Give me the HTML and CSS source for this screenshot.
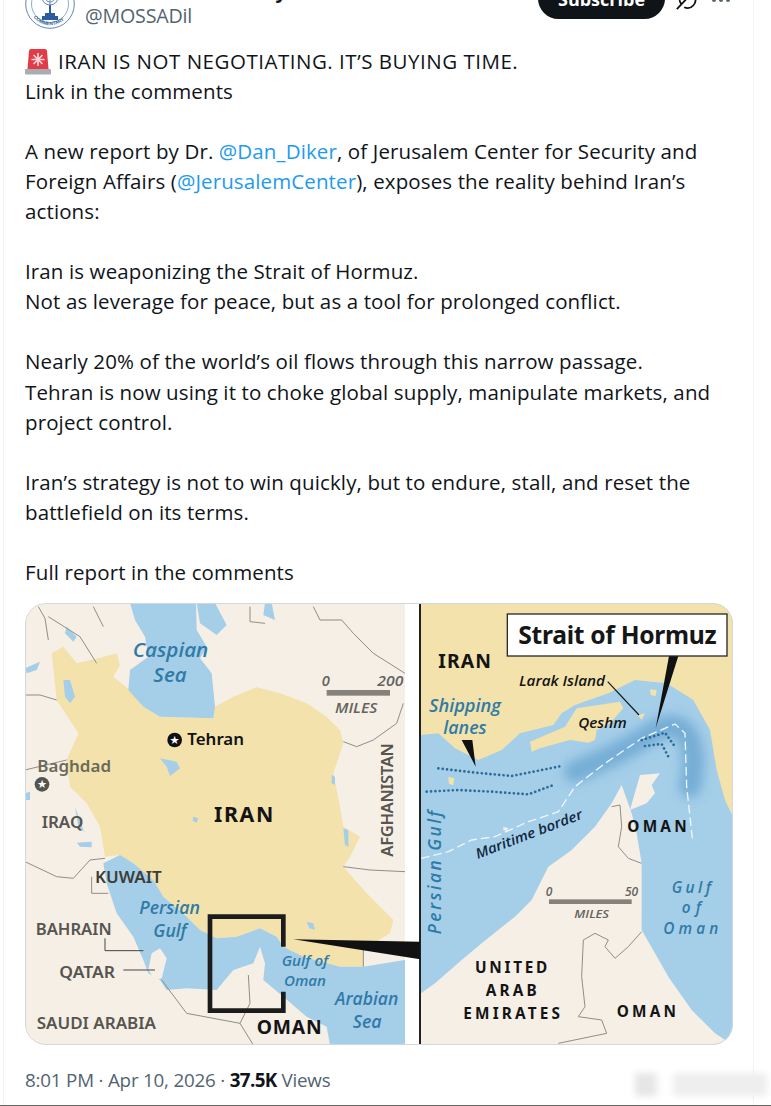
FILE: index.html
```html
<!DOCTYPE html>
<html lang="en">
<head>
<meta charset="utf-8">
<title>Post</title>
<link rel="stylesheet" href="styles.css">
</head>
<body>
<main class="page">
<article class="card">
  <header class="head">
    <svg class="avatar" viewBox="0 0 50 50" aria-hidden="true">
      <circle cx="25" cy="25" r="24.300" fill="#fff" stroke="#5f86b8" stroke-width="1"/>
      <circle cx="25" cy="25" r="18.500" fill="#fff" stroke="#5f86b8" stroke-width=".7"/>
      <path d="M17 41V37H20V34H24V26H26V34H30V37H33V41Z" fill="#2b5c9e"/>
      <path d="M17 18a8 8 0 0 0 16 0M20 18a5 5 0 0 0 10 0M25 12V26" fill="none" stroke="#5f86b8" stroke-width="1"/>
      <path id="arc" d="M5.500 33a21 21 0 0 0 39 0" fill="none"/>
      <text class="av-text"><textPath href="#arc" startOffset="6">COMMENTARY</textPath></text>
    </svg>
    <div class="who">
      <div class="name-line"><span class="name">Mossad Commentary</span>
        <svg class="badge" viewBox="0 0 24 24" aria-hidden="true"><path d="M12 1l3 2.500 4-.5 1 4 3 2.500-2 3.500 1 4-4 1-2 3.500-4-1.500-4 1.500-2-3.500-4-1 1-4-2-3.500 3-2.500 1-4 4 .5z" fill="#1d9bf0"/></svg>
      </div>
      <div class="handle">@MOSSADil</div>
    </div>
    <button class="subscribe" type="button">Subscribe</button>
    <svg class="grok" viewBox="0 0 24 24" aria-hidden="true"><path d="M2 23 20 4M6.500 17A8.500 8.500 0 0 1 18 5M21 9a8.500 8.500 0 0 1-11 12" fill="none" stroke="#0f1419" stroke-width="2"/></svg>
    <div class="more" aria-hidden="true"><i></i><i></i><i></i></div>
  </header>

  <div class="body">
    <p class="tweet"><svg class="siren" viewBox="0 0 26 27" aria-hidden="true"><path d="M2.500 21 4 3Q4.200 1 6 1H20Q21.800 1 22 3L23.500 21Z" fill="#e23b48"/><path d="M13 5V18M6.500 11.500H19.500M8.500 7l9 9M17.500 7l-9 9" stroke="#fbd3d6" stroke-width="1.700"/><rect y="21" width="26" height="5.500" rx="1" fill="#a7adb0"/></svg><span class="headline">IRAN IS NOT NEGOTIATING. IT’S BUYING TIME.</span><br>Link in the comments<br><br>A new report by Dr. <a class="link">@Dan_Diker</a>, of Jerusalem Center for Security and<br>Foreign Affairs (<a class="link">@JerusalemCenter</a>), exposes the reality behind Iran’s<br>actions:<br><br>Iran is weaponizing the Strait of Hormuz.<br>Not as leverage for peace, but as a tool for prolonged conflict.<br><br>Nearly 20% of the world’s oil flows through this narrow passage.<br>Tehran is now using it to choke global supply, manipulate markets, and<br>project control.<br><br>Iran’s strategy is not to win quickly, but to endure, stall, and reset the<br>battlefield on its terms.<br><br>Full report in the comments</p>

    <figure class="media">
      <svg class="map" viewBox="25 603 708 442" role="img" aria-label="Maps of Iran and the Strait of Hormuz">
        <defs>
          <filter id="soft" filterUnits="userSpaceOnUse" x="300" y="200" width="800" height="600"><feGaussianBlur stdDeviation="16"/></filter>
          <filter id="img" x="-5%" y="-5%" width="110%" height="110%"><feGaussianBlur stdDeviation=".9"/></filter>
        </defs>
        <rect x="25" y="603" width="708" height="442" fill="#fff"/>
        <!-- left map -->
        <g transform="translate(20 600) scale(.33333)">
          <rect x="15" y="9" width="1140" height="1326" class="land"/>
          <g filter="url(#img)">
          <path class="iran" d="M95 160 130 140 170 190 235 175 290 160 300 195 280 230 330 270 370 320 420 350 580 355 585 320 640 290 710 262 780 280 860 310 920 350 960 390 970 430 940 520 960 620 970 680 1020 710 990 770 970 800 1040 880 1080 920 1120 960 1110 1000 1030 1050 1030 1100 960 1100 850 1070 790 1040 770 1010 720 985 650 1010 590 1015 540 990 500 950 430 890 400 840 340 790 300 765 255 770 240 680 200 610 150 560 140 480 175 400 110 300Z"/>
          <path class="water" d="M330 9 345 60 375 110 385 170 330 210 325 270 370 320 420 350 580 355 585 320 575 220 540 175 560 140 530 90 528 9Z"/>
          <path class="water" d="M530 9 540 70 590 105 620 75 585 9ZM735 9 730 45 765 60 755 9Z"/>
          <path class="water" d="M300 765 340 790 400 840 430 890 500 950 540 990 590 1015 650 1010 720 985 770 1010 790 1040 850 1070 960 1100 1030 1100 1155 1080V1335H930L920 1280 860 1250 790 1190 730 1140 735 1090 720 1040 700 1090 640 1110 590 1170 500 1165 440 1170 420 1140 385 1120 370 1080 340 1010 290 940 260 850 250 790Z"/>
          <path class="land" d="M385 1110 395 1060 420 1045 440 1075 425 1135 405 1140Z"/>
          <path class="water" d="M130 240 150 240 165 290 150 310 135 290ZM420 475 470 485 480 505 450 528 440 500ZM140 80 170 110 160 125 135 100ZM15 205 60 185 50 210 20 220ZM15 580 30 575 30 600 15 600ZM165 620 190 690 200 700 175 680ZM170 728 215 725 215 742 180 740ZM520 650 535 655 530 668 518 662ZM860 965 880 970 885 990 868 985ZM970 685 985 690 985 740 975 735ZM935 525 945 530 945 555 935 550Z"/>
          <g class="border">
            <path d="M55 20 75 55 85 120M85 50 180 110 230 190M220 20 240 60 250 80M690 20 690 65 735 70M880 20 900 60 965 60 1000 100 1060 160 1155 220M1150 310 1130 370 1060 420 1010 440 970 425M970 800 1050 810 1155 815M15 785 110 830 160 835 210 780 255 775M215 830 215 880 265 880M15 285 60 285 110 300M425 1140 500 1240 660 1270 690 1210 685 1125M660 1270 700 1335M140 480 15 510M1030 1100 1030 1050"/>
          </g>
          <path class="black-line" d="M255 1015V1052H370M310 1110H405"/>
          </g>
          <path class="frame" d="M790 1040V950H570V1232H790V1175"/>
          <rect x="920" y="270" width="190" height="17" class="scale"/>
          <circle cx="464" cy="420" r="22" class="ink"/>
          <text x="464" y="432" class="star">★</text>
          <circle cx="66" cy="553" r="22" fill="#55544f"/>
          <text x="66" y="565" class="star">★</text>

          <text class="sea" x="338" y="170" font-size="58" textLength="227" lengthAdjust="spacingAndGlyphs">Caspian</text>
          <text class="sea" x="400" y="245" font-size="58" textLength="100" lengthAdjust="spacingAndGlyphs">Sea</text>
          <text class="gi" x="905" y="258" font-size="44">0</text>
          <text class="gi" x="1072" y="258" font-size="44" textLength="78" lengthAdjust="spacingAndGlyphs">200</text>
          <text class="gi" x="945" y="338" font-size="44" textLength="127" lengthAdjust="spacingAndGlyphs">MILES</text>
          <text class="city" x="502" y="436" textLength="170" lengthAdjust="spacingAndGlyphs">Tehran</text>
          <text class="place soft" x="52" y="517" textLength="221" lengthAdjust="spacingAndGlyphs">Baghdad</text>
          <text class="big" x="582" y="665" font-size="64" textLength="178">IRAN</text>
          <text class="place" x="65" y="685" textLength="125" lengthAdjust="spacingAndGlyphs">IRAQ</text>
          <text class="place" transform="translate(1120 770) rotate(-90)" font-size="46" textLength="340">AFGHANISTAN</text>
          <text class="place dark" x="225" y="850" textLength="200" lengthAdjust="spacingAndGlyphs">KUWAIT</text>
          <text class="sea" x="358" y="942" font-size="52" textLength="182" lengthAdjust="spacingAndGlyphs">Persian</text>
          <text class="sea" x="400" y="1010" font-size="52" textLength="100" lengthAdjust="spacingAndGlyphs">Gulf</text>
          <text class="place" x="47" y="1005" textLength="228" lengthAdjust="spacingAndGlyphs">BAHRAIN</text>
          <text class="place" x="118" y="1135" textLength="167" lengthAdjust="spacingAndGlyphs">QATAR</text>
          <text class="place" x="50" y="1288" textLength="358" lengthAdjust="spacingAndGlyphs">SAUDI ARABIA</text>
          <text class="sea" x="785" y="1097" font-size="44" textLength="140" lengthAdjust="spacingAndGlyphs">Gulf of</text>
          <text class="sea" x="792" y="1157" font-size="44" textLength="126" lengthAdjust="spacingAndGlyphs">Oman</text>
          <text class="sea" x="945" y="1215" font-size="54" textLength="190" lengthAdjust="spacingAndGlyphs">Arabian</text>
          <text class="sea" x="998" y="1283" font-size="54" textLength="87" lengthAdjust="spacingAndGlyphs">Sea</text>
          <text class="big" x="710" y="1302" font-size="58" textLength="195">OMAN</text>
        </g>
        <rect x="405" y="603" width="14" height="442" fill="#fff"/>
        <!-- right map -->
        <g transform="translate(415 600) scale(.33333)">
          <rect x="18" y="9" width="936" height="1326" class="water"/>
          <g filter="url(#img)">
          <path class="iran" d="M18 405 70 400 120 445 190 480 260 450 315 400 415 375 440 340 480 315 580 280 660 240 755 250 835 300 885 390 905 510 930 600 954 650V9H18Z"/>
          <path class="iran" d="M345 425 350 455 375 445 465 420 520 428 540 420 545 390 585 370 625 325 615 305 485 325 450 380 415 395Z"/>
          <path class="land" d="M18 1180 60 1150 140 1080 200 1030 300 950 350 900 400 800 470 750 540 680 590 610 620 555 650 640 665 700 680 790 680 990 720 1060 760 1130 830 1230 900 1300 954 1335H18Z"/>
          <path class="land" d="M645 630 675 525 735 520 710 555 720 580 695 610Z"/>
          <path class="iran" d="M100 530 118 535 115 555 102 552ZM705 268 725 270 722 288 707 285ZM668 345 690 340 680 360Z"/>
          <path class="land" d="M265 680 280 685 275 693 265 690Z"/>
          <path d="M480 515Q600 470 710 400Q785 350 822 415Q845 480 825 560" class="glow" filter="url(#soft)"/>
          <path class="border" d="M590 620 615 615 620 680 610 740 640 775 680 790M680 995 640 1040 600 1075 570 1040 580 1020 540 1000 505 1020 500 1130 510 1220 490 1250 560 1260 575 1300 430 1330"/>
          <path class="maritime" d="M18 775 100 755 170 720 240 710 340 665 430 635 480 560 570 490 680 415 780 372 810 400 815 560 832 715"/>
          </g>
          <path class="dots" d="M70 505 180 518 290 528 440 498M35 575 130 570 230 575 340 583 415 555M680 420 750 398 780 440M690 438 740 432 760 470"/>
          <path class="thin" d="M578 245 672 345"/>
          <path class="ink" d="M762 168H790L722 385ZM140 420H172L182 500Z"/>
          <rect x="277" y="42" width="659" height="126" class="title-box"/>
          <text class="title" x="310" y="131" textLength="595">Strait of Hormuz</text>
          <rect x="402" y="898" width="248" height="14" class="scale"/>
          <text class="big" x="70" y="205" font-size="58" textLength="158">IRAN</text>
          <text class="note" x="312" y="258" textLength="258" lengthAdjust="spacingAndGlyphs">Larak Island</text>
          <text class="note" x="490" y="385" textLength="145" lengthAdjust="spacingAndGlyphs">Qeshm</text>
          <text class="sea" x="42" y="335" font-size="52" textLength="216" lengthAdjust="spacingAndGlyphs">Shipping</text>
          <text class="sea" x="85" y="403" font-size="52" textLength="130" lengthAdjust="spacingAndGlyphs">lanes</text>
          <text class="note navy" transform="translate(188 777) rotate(-21)" textLength="340" lengthAdjust="spacingAndGlyphs">Maritime border</text>
          <text class="big" x="637" y="697" font-size="46" textLength="178">OMAN</text>
          <text class="sea" x="770" y="878" font-size="46" textLength="118">Gulf</text>
          <text class="sea" x="800" y="940" font-size="46" textLength="58">of</text>
          <text class="sea" x="745" y="1003" font-size="46" textLength="165">Oman</text>
          <text class="sea" transform="translate(78 1003) rotate(-90)" font-size="52" textLength="371">Persian Gulf</text>
          <text class="gi" x="392" y="888" font-size="36">0</text>
          <text class="gi" x="630" y="888" font-size="36">50</text>
          <text class="gi" x="478" y="955" font-size="34" textLength="104" lengthAdjust="spacingAndGlyphs">MILES</text>
          <text class="big" x="180" y="1118" font-size="46" textLength="217">UNITED</text>
          <text class="big" x="212" y="1188" font-size="46" textLength="153">ARAB</text>
          <text class="big" x="145" y="1257" font-size="46" textLength="290">EMIRATES</text>
          <text class="big" x="605" y="1250" font-size="46" textLength="178">OMAN</text>
        </g>
        <rect x="419" y="603" width="2" height="442" fill="#222"/>
        <path d="M293.300 939.300 420 941.700V959.300Z" class="ink"/>
      </svg>
    </figure>

    <p class="meta">8:01 PM · Apr 10, 2026 · <b class="views">37.5K</b> Views</p>
  </div>
  <div class="watermark" aria-hidden="true"></div>
</article>
<div class="next" aria-hidden="true"></div>
</main>
</body>
</html>
```

FILE: styles.css
```css
html, body { margin: 0; height: 100%; background: #fff; }
body { overflow: hidden; }
.page {
  height: 1106px;
  display: flex;
  flex-direction: column;
  overflow: hidden;
  font-family: "Open Sans", "Liberation Sans", sans-serif;
  color: #0f1419;
}
.card {
  position: relative;
  flex: 1;
  width: 751px;
  margin-left: 3px;
  border: solid #eff3f4;
  border-width: 0 1px;
  box-sizing: border-box;
}
.head {
  display: flex;
  align-items: flex-start;
  margin-top: -22px;
  padding-left: 21px;
  height: 68px;
}
.avatar { width: 50px; height: 50px; flex: none; margin-top: 1px; }
.av-text { font: 700 4.800px "Liberation Sans", sans-serif; fill: #2b5c9e; }
.who { margin-left: 10px; width: 453px; }
.name-line { display: flex; align-items: center; height: 25px; }
.name { font-size: 19.500px; font-weight: 700; line-height: 25px; letter-spacing: -.3px; white-space: nowrap; }
.badge { width: 22px; height: 22px; margin-left: 3px; }
.handle { font-size: 19.700px; line-height: 26px; color: #536471; letter-spacing: -.2px; }
.subscribe {
  width: 127px;
  height: 41px;
  padding: 0;
  border: 0;
  border-radius: 21px;
  background: #0f1419;
  color: #fff;
  font: 700 18px "Open Sans", sans-serif;
}
.grok { width: 22px; height: 22px; margin: 10px 0 0 10px; }
.more { display: flex; gap: 3px; margin: 20px 0 0 15px; }
.more i { width: 4px; height: 4px; border-radius: 50%; background: #536471; }
.body { padding-left: 21px; }
.tweet {
  margin: 0;
  font-size: 20.500px;
  line-height: 30.05px;
  letter-spacing: .12px;
  white-space: nowrap;
}
.headline { letter-spacing: .52px; }
.siren { width: 26px; height: 27px; vertical-align: -6px; margin-right: 7px; }
.link { color: #1d9bf0; }
.media {
  position: relative;
  margin: 16px 0 0;
  width: 708px;
  height: 442px;
  border-radius: 21px;
  overflow: hidden;
}
.media::after {
  content: "";
  position: absolute;
  inset: 0;
  border: 1px solid #cfd9de;
  border-radius: 21px;
}
.map { display: block; width: 708px; height: 442px; }
.land { fill: #f5efe6; }
.water { fill: #a5cee8; }
.iran { fill: #f3e2ac; }
.border { fill: none; stroke: #8f8e88; stroke-width: 3; }
.black-line { fill: none; stroke: #444; stroke-width: 3; }
.frame { fill: none; stroke: #1c1c1c; stroke-width: 14; }
.ink { fill: #111; }
.scale { fill: #85827b; }
.star { font: 34px "DejaVu Sans", sans-serif; fill: #fff; text-anchor: middle; }
.sea { font-family: "Open Sans", sans-serif; font-style: italic; font-weight: 600; fill: #2f7ba6; }
.gi { font-family: "Open Sans", sans-serif; font-style: italic; font-weight: 600; fill: #64625d; }
.city { font: 600 50px "Noto Sans", sans-serif; fill: #111; }
.place { font: 600 50px "Noto Sans", sans-serif; fill: #56554f; }
.soft { fill: #6b6a58; }
.dark { fill: #3c3c38; }
.big { font-family: "Noto Sans", sans-serif; font-weight: 700; fill: #141414; }
.note { font: italic 600 42px "Open Sans", sans-serif; fill: #141414; }
.navy { fill: #10283f; }
.title-box { fill: #fff; stroke: #2a2a2a; stroke-width: 4; }
.title { font: 700 74px "Noto Sans", sans-serif; fill: #161616; }
.glow { fill: none; stroke: #6ba6d1; stroke-width: 66; stroke-linecap: round; opacity: .8; }
.maritime { fill: none; stroke: #eef7fc; stroke-width: 4; stroke-dasharray: 26 12; }
.dots { fill: none; stroke: #2c6b97; stroke-width: 8; stroke-linecap: round; stroke-dasharray: .1 13; }
.thin { fill: none; stroke: #151515; stroke-width: 3.500; }
.meta {
  margin: 22px 0 0;
  font-size: 18.800px;
  line-height: 26px;
  color: #536471;
  letter-spacing: -.2px;
}
.views { color: #0f1419; letter-spacing: -.6px; }
.watermark {
  position: absolute;
  right: -14px;
  bottom: 9px;
  width: 132px;
  height: 23px;
  background: linear-gradient(90deg, #e6e6e6 0 14%, #fff 19% 26%, #eee 32% 100%);
  filter: blur(3px);
}
.next { height: 1px; flex: none; background: #66645f; }
```
